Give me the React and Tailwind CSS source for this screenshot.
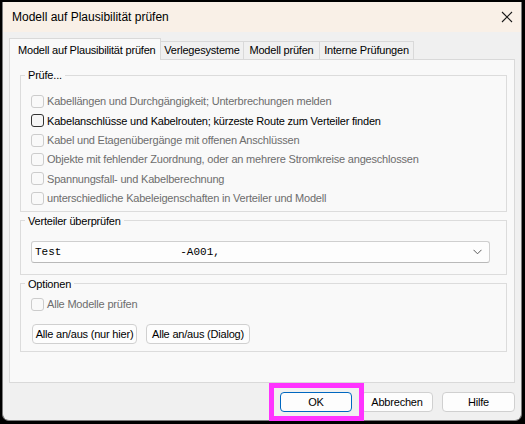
import React from "react";

const CHECKS = [
  { label: "Kabellängen und Durchgängigkeit; Unterbrechungen melden", enabled: false },
  { label: "Kabelanschlüsse und Kabelrouten; kürzeste Route zum Verteiler finden", enabled: true },
  { label: "Kabel und Etagenübergänge mit offenen Anschlüssen", enabled: false },
  { label: "Objekte mit fehlender Zuordnung, oder an mehrere Stromkreise angeschlossen", enabled: false },
  { label: "Spannungsfall- und Kabelberechnung", enabled: false },
  { label: "unterschiedliche Kabeleigenschaften in Verteiler und Modell", enabled: false },
];

const TABS = [
  { label: "Verlegesysteme", w: "w-[83px]" },
  { label: "Modell prüfen", w: "w-[76px]" },
  { label: "Interne Prüfungen", w: "w-[94px]" },
];

function CheckRow({ label, enabled }) {
  return (
    <div className="flex items-center h-[19.3px] gap-[3px]">
      <div
        className={`w-[13px] h-[13px] rounded-[3px] border shrink-0 ${
          enabled ? "border-[#333333] bg-[#f6f6f6]" : "border-[#cccccc] bg-[#f9f9f9]"
        }`}
      />
      <span className={`whitespace-nowrap ${enabled ? "text-black" : "text-[#6d6d6d]"}`}>{label}</span>
    </div>
  );
}

function Group({ title, className = "", children }) {
  return (
    <fieldset className={`border border-[#dcdcdc] pl-[10px] w-[487px] ${className}`}>
      <legend className="-ml-[6px] px-[3px] leading-4 text-black">{title}</legend>
      {children}
    </fieldset>
  );
}

function Btn({ children, className = "" }) {
  return (
    <button className={`h-[20px] rounded-[4px] border bg-[#fdfdfd] text-black leading-none ${className}`}>
      {children}
    </button>
  );
}

export default function App() {
  return (
    <div
      className="w-[525px] h-[424px] bg-black pt-[2px] pl-[2px] text-[11px] tracking-[-0.2px]"
      style={{ fontFamily: '"Liberation Sans", Arial, sans-serif' }}
    >
      <div className="relative w-[520px] h-[419px] bg-[#f0f0f0] border-x border-b border-[#7c7c7c] rounded-b-[7px] flex flex-col">
        <div className="h-[30px] bg-[#f9f0e7] flex items-center justify-between pl-[9px] pr-[7px] shrink-0">
          <span className="text-[12px] tracking-normal text-black">Modell auf Plausibilität prüfen</span>
          <svg width="12" height="12" viewBox="0 0 12 12" className="mr-[1px]">
            <path d="M1 1 L11 11 M11 1 L1 11" stroke="#1a1a1a" strokeWidth="1.1" fill="none" />
          </svg>
        </div>

        <div className="flex-1 px-[6px] pt-[6px] flex flex-col">
          <div className="flex items-end h-[21px]">
            <div className="relative z-10 w-[152px] h-[22px] -mb-px bg-[#f9f9f9] border-x border-t border-[#d9d9d9] pl-[8px] pt-[3px] whitespace-nowrap text-black">
              Modell auf Plausibilität prüfen
            </div>
            {TABS.map((t) => (
              <div
                key={t.label}
                className={`${t.w} h-[18px] bg-[#f0f0f0] border-t border-r border-[#d9d9d9] flex items-center justify-center whitespace-nowrap text-black`}
              >
                {t.label}
              </div>
            ))}
          </div>

          <div className="h-[324px] border border-[#d9d9d9] bg-[#f9f9f9] pl-[10px] pt-[7px] flex flex-col">
            <Group title="Prüfe..." className="pt-[9px] pb-[3px]">
              {CHECKS.map((c) => (
                <CheckRow key={c.label} label={c.label} enabled={c.enabled} />
              ))}
            </Group>

            <Group title="Verteiler überprüfen" className="mt-[1px] pt-[12px] pb-[11px]">
              <div className="w-[459px] h-[22px] rounded-[3px] border border-[#cfcfcf] border-b-[#b9b9b9] bg-[#fdfdfd] flex items-center justify-between pl-[3px] pr-[7px]">
                <span
                  className="whitespace-pre text-[11px] tracking-normal text-black"
                  style={{ fontFamily: '"Liberation Mono", "Courier New", monospace' }}
                >
                  {"Test                  -A001,"}
                </span>
                <svg width="9" height="6" viewBox="0 0 9 6">
                  <path d="M0.5 0.8 L4.5 4.8 L8.5 0.8" stroke="#5a5a5a" strokeWidth="1" fill="none" />
                </svg>
              </div>
            </Group>

            <Group title="Optionen" className="mt-[1px] pt-[3px] pb-[7px]">
              <CheckRow label="Alle Modelle prüfen" enabled={false} />
              <div className="flex gap-[9px] mt-[10px] pl-[1px]">
                <Btn className="w-[105px] border-[#d0d0d0]">Alle an/aus (nur hier)</Btn>
                <Btn className="w-[104px] border-[#d0d0d0]">Alle an/aus (Dialog)</Btn>
              </div>
            </Group>
          </div>

          <div className="flex justify-end gap-[9px] pt-[9px]">
            <Btn className="w-[72px] border-[#0067c0]">OK</Btn>
            <Btn className="w-[72px] border-[#d0d0d0]">Abbrechen</Btn>
            <Btn className="w-[73px] border-[#d0d0d0]">Hilfe</Btn>
          </div>
        </div>

        <div className="absolute left-[266px] top-[381px] w-[95px] h-[38px] border-[5px] border-[#ff33ff] pointer-events-none" />
      </div>
    </div>
  );
}
